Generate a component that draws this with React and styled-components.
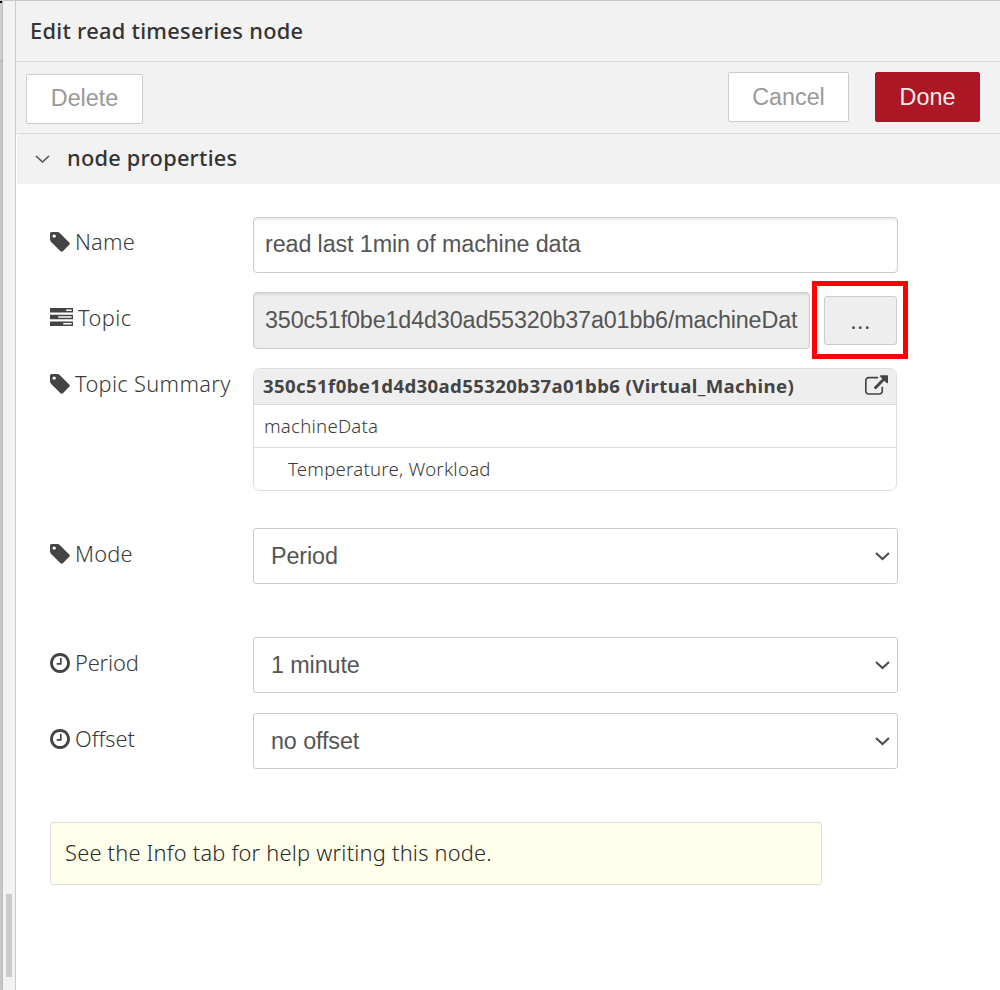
import React from "react";
import styled, { createGlobalStyle, css } from "styled-components";

const human = '"Noto Sans", "Open Sans", sans-serif';
const arial = '"Liberation Sans", Arial, sans-serif';

const GlobalStyle = createGlobalStyle`
  *, *::before, *::after { box-sizing: border-box; }
  body { margin: 0; background: #fff; }
`;

const Page = styled.div`
  display: flex;
  width: 1000px;
  height: 990px;
  overflow: hidden;
  background: #fff;
  border-top: 1px solid #c9c9c9;
  font-family: ${human};
  color: #444;
`;

const CanvasEdge = styled.div`
  width: 3px;
  flex: none;
  background: #c6c6c6;
  border-right: 1px solid #bdbdbd;
`;

const CanvasTab = styled.div`
  height: 60px;
  border-top: 2px solid #000;
  border-bottom: 1px solid #b0b0b0;
  background: #cfcfcf;
`;

const Gutter = styled.div`
  display: flex;
  flex-direction: column;
  justify-content: flex-end;
  align-items: flex-start;
  width: 13px;
  flex: none;
  padding: 0 0 13px 3px;
  background: #f2f2f2;
  border-right: 1px solid #ccc;
`;

const GutterThumb = styled.div`
  width: 6px;
  height: 83px;
  background: #cbcbcb;
`;

const Panel = styled.main`
  flex: 1;
  min-width: 0;
  display: flex;
  flex-direction: column;
`;

const Title = styled.h1`
  margin: 0;
  height: 61px;
  padding-left: 14px;
  background: #f2f2f2;
  border-bottom: 1px solid #dadada;
  font-size: 21.8px;
  font-weight: 500;
  letter-spacing: 0.3px;
  line-height: 60px;
  color: #333;
`;

const Toolbar = styled.div`
  display: flex;
  align-items: flex-start;
  height: 72px;
  padding: 10px 20px 0 10px;
  background: #f2f2f2;
  border-bottom: 1px solid #dadada;
`;

const Button = styled.button`
  width: ${(p) => p.$width}px;
  height: 50px;
  margin: ${(p) => p.$margin || 0};
  padding: 0 0 ${(p) => p.$lift || 0}px;
  border: 1px solid #ccc;
  border-radius: 2px;
  background: #fff;
  color: #999;
  font: 23.33px/46px ${arial};
  ${(p) =>
    p.$primary &&
    css`
      border-color: #ad1625;
      background: #ad1625;
      color: #eee;
    `}
`;

const SectionHeader = styled.div`
  display: flex;
  align-items: center;
  height: 50px;
  margin-left: 1px;
  padding-left: 18px;
  background: #f2f2f2;
  color: #333;
`;

const SectionTitle = styled.h2`
  margin: 0 0 2px 17px;
  font-size: 21.8px;
  font-weight: 500;
  letter-spacing: 0.23px;
  line-height: 48px;
`;

const Form = styled.form`
  display: flex;
  flex-direction: column;
  padding: 33px 0 0 34px;
`;

const Row = styled.div`
  display: flex;
  align-items: flex-start;
  height: ${(p) => p.$height}px;
`;

const Label = styled.label`
  display: flex;
  align-items: center;
  gap: 5px;
  width: 203px;
  height: 32px;
  margin-top: ${(p) => p.$top ?? 9}px;
  flex: none;
  font-size: 21.8px;
  font-weight: 350;
  letter-spacing: ${(p) => p.$track || 0}px;
  white-space: nowrap;
  color: #3a3a3a;
`;

const Field = styled.div`
  width: ${(p) => p.$width || 645}px;
  height: ${(p) => p.$height || 56}px;
  padding: 0 11px;
  border: 1px solid #ccc;
  border-radius: 4px;
  background: ${(p) => (p.$disabled ? "#eee" : "#fff")};
  box-shadow: inset 0 2px 2px rgba(0, 0, 0, 0.075);
  font: 23.33px/${(p) => (p.$disabled ? 55 : 53)}px ${arial};
  letter-spacing: ${(p) => (p.$disabled ? -0.14 : -0.11)}px;
  white-space: nowrap;
  color: #555;
`;

const Select = styled.div`
  display: flex;
  align-items: center;
  justify-content: space-between;
  width: 645px;
  height: 56px;
  padding: 0 7px 0 17px;
  border: 1px solid #ccc;
  border-radius: 3px;
  background: #fff;
  font: 23.33px/54px ${arial};
  letter-spacing: -0.1px;
  color: #555;
`;

const Highlight = styled.div`
  width: 96px;
  height: 78px;
  margin: -11px 0 0 2px;
  padding: 10px 7px;
  border: 5px solid #fe0000;
`;

const Browse = styled.button`
  display: block;
  width: 73px;
  height: 49px;
  padding: 0 0 0 1px;
  border: 1px solid #ccc;
  border-radius: 3px;
  background: #eee;
  font: 20px/49px ${human};
  letter-spacing: 1.4px;
  color: #444;
`;

const Summary = styled.div`
  width: 644px;
  height: 123px;
  border: 1px solid #ddd;
  border-radius: 7px;
  overflow: hidden;
  font-size: 18.6px;
`;

const SummaryHead = styled.div`
  display: flex;
  justify-content: space-between;
  height: 36px;
  padding: 0 8px 0 9px;
  border-bottom: 1px solid #ddd;
  background: #eee;
  font-weight: 700;
  letter-spacing: 0.38px;
  line-height: 33px;
`;

const SummaryLine = styled.div`
  height: 43px;
  padding-left: ${(p) => p.$indent || 10}px;
  border-bottom: 1px solid #ddd;
  line-height: 41px;
  font-weight: 350;
  letter-spacing: 0.24px;
  color: #3a3a3a;
`;

const Tip = styled.div`
  width: 772px;
  height: 63px;
  padding-left: 14px;
  border: 1px solid #ddd;
  border-radius: 3px;
  background: #ffffec;
  font-size: 21.8px;
  font-weight: 350;
  letter-spacing: 0.23px;
  line-height: 59px;
  color: #2a2a2a;
`;

const Glyph = styled.svg`
  display: block;
  flex: none;
  margin-top: ${(p) => p.$drop || 0}px;
  fill: currentColor;
  color: #444;
`;

const TagIcon = () => (
  <Glyph $drop={2} width="20" height="20" viewBox="0 128 1536 1536">
    <path d="M448 448q0-53-37.5-90.5t-90.5-37.5-90.5 37.5-37.5 90.5 37.5 90.5 90.5 37.5 90.5-37.5 37.5-90.5zm1067 576q0 53-37 90l-491 492q-39 37-91 37-53 0-90-37l-715-716q-38-37-64.5-101t-26.5-117v-416q0-52 38-90t90-38h416q53 0 117 26.5t102 64.5l715 714q37 39 37 91z" />
  </Glyph>
);

const ClockIcon = () => (
  <Glyph $drop={2} width="20" height="20" viewBox="128 128 1536 1536">
    <path d="M1024 544v448q0 14-9 23t-23 9h-320q-14 0-23-9t-9-23v-64q0-14 9-23t23-9h224v-352q0-14 9-23t23-9h64q14 0 23 9t9 23zm416 352q0-148-73-273t-198-198-273-73-273 73-198 198-73 273 73 273 198 198 273 73 273-73 198-198 73-273zm224 0q0 209-103 385.5t-279.5 279.5-385.5 103-385.5-103-279.5-279.5-103-385.5 103-385.5 279.5-279.5 385.5-103 385.5 103 279.5 279.5 103 385.5z" />
  </Glyph>
);

const TasksIcon = () => (
  <Glyph width="23" height="18" viewBox="0 0 23 18">
    <path
      fillRule="evenodd"
      d="M0 0h23v4.600H0zM16.200 1.500v1.600h5.500v-1.600zM0 6.700h23v4.600H0zM8.200 8.200v1.600h13.500v-1.600zM0 13.400h23v4.600H0zM13.200 14.900v1.600h8.500v-1.600z"
    />
  </Glyph>
);

const ExternalIcon = () => (
  <Glyph $drop={6} width="23" height="20" viewBox="0 0 1792 1536">
    <path d="M1408 928v320q0 119-84.5 203.5t-203.5 84.500h-832q-119 0-203.500-84.500t-84.500-203.500v-832q0-119 84.500-203.500t203.500-84.500h704q14 0 23 9t9 23v64q0 14-9 23t-23 9h-704q-66 0-113 47t-47 113v832q0 66 47 113t113 47h832q66 0 113-47t47-113v-320q0-14 9-23t23-9h64q14 0 23 9t9 23zm384-864v512q0 26-19 45t-45 19-45-19l-176-176-652 652q-10 10-23 10t-23-10l-114-114q-10-10-10-23t10-23l652-652-176-176q-19-19-19-45t19-45 45-19h512q26 0 45 19t19 45z" />
  </Glyph>
);

const Chevron = ({ weight = 2.2, width = 15 }) => (
  <svg width={width} height="9" viewBox="0 0 15 9" fill="none" stroke="#505050" strokeWidth={weight}>
    <path d="M1 1l6.500 6 6.500-6" />
  </svg>
);

export default function App() {
  return (
    <Page>
      <GlobalStyle />
      <CanvasEdge>
        <CanvasTab />
      </CanvasEdge>
      <Gutter>
        <GutterThumb />
      </Gutter>
      <Panel>
        <Title>Edit read timeseries node</Title>
        <Toolbar>
          <Button $width={117} $margin="2px auto 0 0" $lift={2}>Delete</Button>
          <Button $width={121} $margin="0 26px 0 0">Cancel</Button>
          <Button $width={105} $primary>Done</Button>
        </Toolbar>
        <SectionHeader>
          <Chevron weight={1.6} />
          <SectionTitle>node properties</SectionTitle>
        </SectionHeader>
        <Form>
          <Row $height={75}>
            <Label $top={8} $track={0.2}><TagIcon />Name</Label>
            <Field>read last 1min of machine data</Field>
          </Row>
          <Row $height={76}>
            <Label $top={9} $track={0.4}><TasksIcon />Topic</Label>
            <Field $width={557} $height={57} $disabled>
              350c51f0be1d4d30ad55320b37a01bb6/machineDat
            </Field>
            <Highlight><Browse type="button">...</Browse></Highlight>
          </Row>
          <Row $height={160}>
            <Label $top={-1} $track={0.33}><TagIcon />Topic Summary</Label>
            <Summary>
              <SummaryHead>
                <span>350c51f0be1d4d30ad55320b37a01bb6 (Virtual_Machine)</span>
                <ExternalIcon />
              </SummaryHead>
              <SummaryLine>machineData</SummaryLine>
              <SummaryLine $indent={34}>Temperature, Workload</SummaryLine>
            </Summary>
          </Row>
          <Row $height={109}>
            <Label $track={0.2}><TagIcon />Mode</Label>
            <Select>Period<Chevron /></Select>
          </Row>
          <Row $height={76}>
            <Label $track={-0.15}><ClockIcon />Period</Label>
            <Select>1 minute<Chevron /></Select>
          </Row>
          <Row $height={109}>
            <Label><ClockIcon />Offset</Label>
            <Select>no offset<Chevron /></Select>
          </Row>
          <Tip>See the Info tab for help writing this node.</Tip>
        </Form>
      </Panel>
    </Page>
  );
}
